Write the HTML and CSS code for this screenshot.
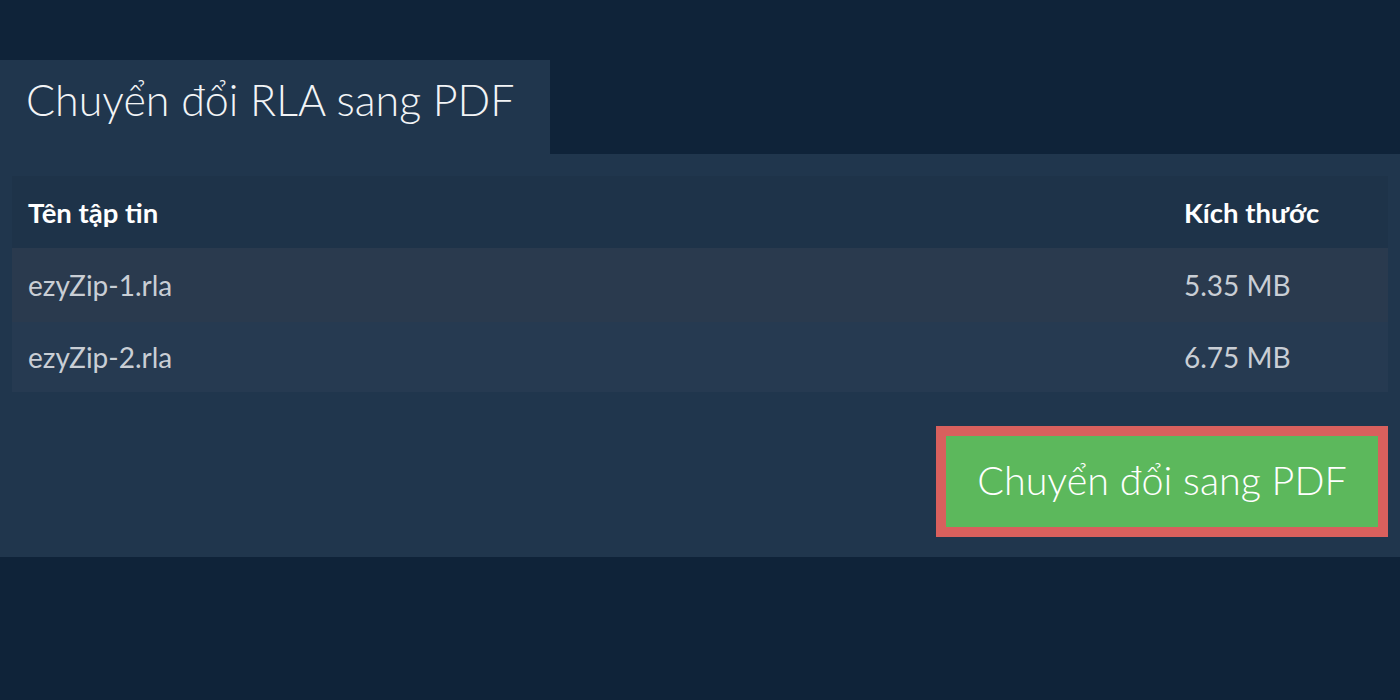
FILE: index.html
```html
<!DOCTYPE html>
<html lang="vi">
<head>
<meta charset="utf-8">
<title>Chuyển đổi RLA sang PDF</title>
<link rel="stylesheet" href="styles.css">
</head>
<body>
<div class="page">
  <div class="tab"><h1 class="title">Chuyển đổi RLA sang PDF</h1></div>
  <div class="panel">
    <table class="files">
      <thead>
        <tr><th class="name">Tên tập tin</th><th class="size">Kích thước</th></tr>
      </thead>
      <tbody>
        <tr class="odd"><td class="name">ezyZip-1.rla</td><td class="size">5.35 MB</td></tr>
        <tr class="even"><td class="name">ezyZip-2.rla</td><td class="size">6.75 MB</td></tr>
      </tbody>
    </table>
    <div class="actions">
      <button class="convert">Chuyển đổi sang PDF</button>
    </div>
  </div>
</div>
</body>
</html>
```
FILE: styles.css
```css
html, body {
  margin: 0;
  padding: 0;
  background: #0f2339;
  font-family: Lato, "Noto Sans", sans-serif;
}
.page {
  padding-top: 60px;
}
.tab {
  width: 550px;
  height: 94px;
  background: #20364d;
  box-sizing: border-box;
  padding-left: 26px;
  display: flex;
  align-items: center;
}
.title {
  margin: 0;
  font-weight: 300;
  font-size: 43px;
  color: #f2f4f6;
  line-height: 1;
  padding-bottom: 16px;
}
.panel {
  background: #20364d;
  padding: 22px 12px 20px;
}
.files {
  width: 100%;
  border-collapse: collapse;
  font-size: 28px;
}
.files th {
  text-align: left;
  font-weight: 700;
  color: #ffffff;
  height: 72px;
  padding: 0 16px;
  background: #1e3349;
  font-size: 27.5px;
}
.files td {
  color: #c9ced5;
  padding: 0 16px;
  height: 72px;
}
.files .size {
  width: 188px;
}
.files tr.odd td {
  background: #2a3a4e;
  height: 74px;
}
.files tr.even td {
  background: #263a51;
  height: 70px;
}
.actions {
  display: flex;
  justify-content: flex-end;
  margin-top: 34px;
}
.convert {
  font-family: Lato, "Noto Sans", sans-serif;
  font-weight: 300;
  font-size: 39.5px;
  color: #ffffff;
  background: #5cb85c;
  border: 10px solid #d9605d;
  width: 452px;
  height: 111px;
  padding: 0 0 4px;
  cursor: pointer;
}
```
